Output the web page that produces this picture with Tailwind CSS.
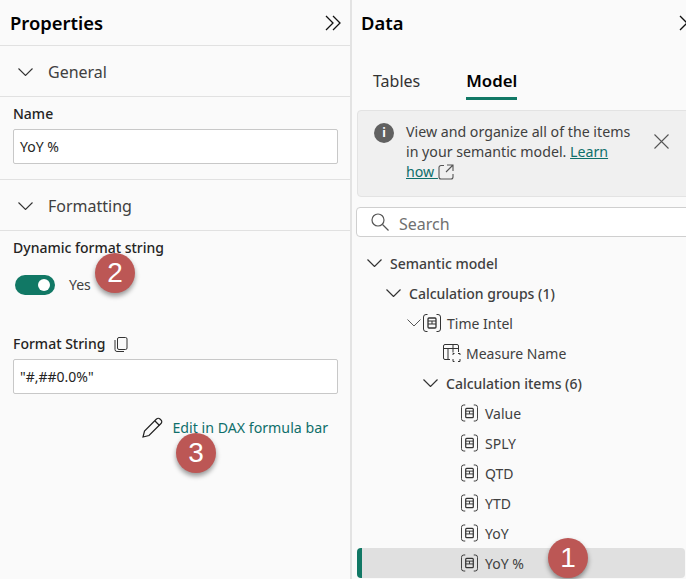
<!DOCTYPE html>
<html lang="en">
  <head>
    <meta charset="UTF-8" />
    <title>Properties and Data panes</title>
    <script src="https://cdn.jsdelivr.net/npm/@tailwindcss/browser@4"></script>
  </head>
  <body class="bg-[#fafafa] font-['Noto_Sans',sans-serif] text-[#252423] overflow-hidden">
    <div class="relative flex w-[686px] h-[579px] overflow-hidden">
      <!-- Properties pane -->
      <section class="w-[350px] shrink-0 h-full">
        <header class="flex items-center justify-between h-[46px] pl-[10px] pr-[9px] border-b border-[#e1e1e1]">
          <h2 class="text-[18.4px] font-semibold text-black">Properties</h2>
          <svg class="w-4 h-4" viewBox="0 0 16 16" fill="none" stroke="#111" stroke-width="1.3"><path d="M1 1l7 7-7 7M8 1l7 7-7 7" /></svg>
        </header>
        <div class="flex items-center h-[51px] pl-[18px] pt-[1px] gap-[15px] border-b border-[#e1e1e1]">
          <svg class="w-[15px] h-[8px]" viewBox="0 0 15 8" fill="none" stroke="#333" stroke-width="1.1"><path d="M.5.5l7 7 7-7" /></svg>
          <span class="text-[16px] text-[#404040]">General</span>
        </div>
        <div class="h-[83px] pl-[13px] pr-[12px] pt-[7px] border-b border-[#e1e1e1]">
          <p class="text-[14px] leading-[20px] font-medium">Name</p>
          <div class="flex items-center h-[35px] mt-[5px] px-[6px] bg-white border border-[#c8c8c8] rounded-[2px] text-[14px]">YoY %</div>
        </div>
        <div class="flex items-center h-[51px] pl-[18px] pt-[1px] gap-[15px] border-b border-[#e1e1e1]">
          <svg class="w-[15px] h-[8px]" viewBox="0 0 15 8" fill="none" stroke="#333" stroke-width="1.1"><path d="M.5.5l7 7 7-7" /></svg>
          <span class="text-[16px] text-[#404040]">Formatting</span>
        </div>
        <div class="pl-[13px] pr-[12px] pt-[7px]">
          <p class="text-[14px] leading-[20px] font-medium">Dynamic format string</p>
          <div class="flex items-center gap-[14px] mt-[16px] ml-[2px]">
            <div class="flex items-center justify-end w-[40px] h-[20px] pr-[5px] rounded-full bg-[#117865]">
              <span class="w-[12px] h-[12px] rounded-full bg-white"></span>
            </div>
            <span class="text-[14px] text-[#404040]">Yes</span>
          </div>
          <div class="flex items-center gap-[9px] mt-[39px]">
            <span class="text-[14px] leading-[20px] font-medium">Format String</span>
            <svg class="w-[14px] h-[15px]" viewBox="0 0 14 15" fill="none" stroke="#333" stroke-width="1"><rect x="3.5" y=".5" width="9.5" height="12" rx="1.5" /><path d="M1 3v9.5A2 2 0 0 0 3 14.5h7" /></svg>
          </div>
          <div class="flex items-center h-[35px] mt-[5px] px-[6px] bg-white border border-[#c8c8c8] rounded-[2px] text-[14px]">"#,##0.0%"</div>
          <div class="flex items-center justify-end gap-[9px] mt-[23px] pr-[10px]">
            <svg class="w-[21px] h-[21px]" viewBox="0 0 21 21" fill="none" stroke="#222" stroke-width="1.2"><path d="M1 20l1.5-6L14.5 2a2.4 2.4 0 0 1 3.5 0l1 1a2.4 2.4 0 0 1 0 3.5L7 18.5z" /><path d="M13 4l4.5 4.5" /></svg>
            <span class="text-[14.2px] text-[#0f6f6b]">Edit in DAX formula bar</span>
          </div>
        </div>
      </section>

      <!-- Data pane -->
      <section class="flex-1 min-w-0 h-full border-l-2 border-[#e3e3e3]">
        <header class="flex items-center justify-between h-[46px] pl-[9px]">
          <h2 class="text-[18.4px] font-semibold text-black">Data</h2>
          <svg class="w-4 h-4 shrink-0 -mr-[9px]" viewBox="0 0 16 16" fill="none" stroke="#111" stroke-width="1.3"><path d="M1 1l7 7-7 7M8 1l7 7-7 7" /></svg>
        </header>
        <nav class="flex gap-[46px] h-[54px] pl-[21px] pt-[21px]">
          <span class="text-[16px] leading-[28px] text-[#333]">Tables</span>
          <span class="h-[33px] text-[16.8px] leading-[28px] font-semibold text-black border-b-[3px] border-[#117865]">Model</span>
        </nav>
        <div class="flex h-[87px] ml-[5px] -mr-[4px] mt-[10px] pl-[16px] pt-[12px] bg-[#f0f0f0] border border-[#e3e3e3] rounded-[4px]">
          <span class="flex items-center justify-center w-[20px] h-[20px] shrink-0 rounded-full bg-[#616161] text-white text-[12px] font-bold leading-none">i</span>
          <p class="w-[228px] ml-[12px] -mt-[1px] text-[14.2px] leading-[20px] text-[#404040]">View and organize all of the items in your semantic model. <a class="text-[#0f6f6b] underline">Learn how </a><svg class="inline w-[16px] h-[16px] align-[-3px]" viewBox="0 0 16 16" fill="none" stroke="#555" stroke-width="1.1"><path d="M6 1.5H3A2 2 0 0 0 1 3.500v9.500a2 2 0 0 0 2 2h10a2 2 0 0 0 2-2v-3M9 1h6v6M15 1L8 8" /></svg></p>
          <svg class="w-[15px] h-[15px] ml-[20px] mt-[11px] shrink-0" viewBox="0 0 15 15" fill="none" stroke="#555" stroke-width="1.1"><path d="M.5.5l14 14M14.500.5l-14 14" /></svg>
        </div>
        <div class="flex items-center h-[30px] ml-[4px] -mr-[6px] mt-[10px] pl-[14px] gap-[10px] bg-white border border-[#cfcfcf] rounded-[4px]">
          <svg class="w-[18px] h-[18px]" viewBox="0 0 18 18" fill="none" stroke="#555" stroke-width="1.2"><circle cx="7" cy="7" r="6" /><path d="M11.500 11.500l6 6" /></svg>
          <span class="relative top-[2px] text-[16px] text-[#707070]">Search</span>
        </div>
        <!-- Tree -->
        <ul class="mt-[11px] text-[14px] text-[#404040]">
          <li class="flex items-center h-[30px] pl-[15px] gap-[8px] font-medium">
            <svg class="w-[15px] h-[8px]" viewBox="0 0 15 8" fill="none" stroke="#333" stroke-width="1.2"><path d="M.5.5l7 7 7-7" /></svg>Semantic model
          </li>
          <li class="flex items-center h-[30px] pl-[34px] gap-[8px] font-medium">
            <svg class="w-[15px] h-[8px]" viewBox="0 0 15 8" fill="none" stroke="#333" stroke-width="1.2"><path d="M.5.5l7 7 7-7" /></svg>Calculation groups (1)
          </li>
          <li class="flex items-center h-[30px] pl-[55px] gap-[2px]">
            <svg class="w-[14px] h-[8px]" viewBox="0 0 14 8" fill="none" stroke="#555" stroke-width="1"><path d="M.5.5L7 7 13.500.5" /></svg>
            <svg class="w-[18px] h-[18px]" viewBox="0 0 18 18" fill="none" stroke="#333" stroke-width="1"><path d="M4.500.5H3A2.500 2.500 0 0 0 .5 3v12A2.500 2.500 0 0 0 3 17.500h1.500M13.500.5H15A2.500 2.500 0 0 1 17.500 3v12a2.500 2.500 0 0 1-2.500 2.500h-1.500" /><rect x="5" y="4" width="8" height="10" rx="1" stroke-width="1.300" /><path d="M5 7h8M5 10h8M9 7v3" /></svg>
            <span class="ml-[4px]">Time Intel</span>
          </li>
          <li class="flex items-center h-[30px] pl-[91px] gap-[5px]">
            <svg class="w-[18px] h-[18px]" viewBox="0 0 18 18" fill="none" stroke="#333" stroke-width="1"><path d="M7 15.500H2A1.500 1.500 0 0 1 .5 14V2A1.500 1.500 0 0 1 2 .5h12A1.500 1.500 0 0 1 15.500 2v6M.5 4.500h15M5 4.500v11M10 .5v8" /><path d="M10 11V9.500h1.500M15 9.500h2V11M10 15v2.500h1.500M15 17.500h2V15" /></svg>
            Measure Name
          </li>
          <li class="flex items-center h-[30px] pl-[71px] gap-[8px] font-medium">
            <svg class="w-[15px] h-[8px]" viewBox="0 0 15 8" fill="none" stroke="#333" stroke-width="1.2"><path d="M.5.5l7 7 7-7" /></svg>Calculation items (6)
          </li>
          <li class="flex items-center h-[30px] pl-[109px] gap-[7px]">
            <svg class="w-[17px] h-[18px]" viewBox="0 0 18 18" fill="none" stroke="#333" stroke-width="1"><path d="M4.500.5H3A2.500 2.500 0 0 0 .5 3v12A2.500 2.500 0 0 0 3 17.500h1.500M13.500.5H15A2.500 2.500 0 0 1 17.500 3v12a2.500 2.500 0 0 1-2.500 2.500h-1.500" /><rect x="5" y="4" width="8" height="10" rx="1" stroke-width="1.300" /><path d="M5 7h8M5 10h8M9 7v3" /></svg>Value
          </li>
          <li class="flex items-center h-[30px] pl-[109px] gap-[7px]">
            <svg class="w-[17px] h-[18px]" viewBox="0 0 18 18" fill="none" stroke="#333" stroke-width="1"><path d="M4.500.5H3A2.500 2.500 0 0 0 .5 3v12A2.500 2.500 0 0 0 3 17.500h1.500M13.500.5H15A2.500 2.500 0 0 1 17.500 3v12a2.500 2.500 0 0 1-2.500 2.500h-1.500" /><rect x="5" y="4" width="8" height="10" rx="1" stroke-width="1.300" /><path d="M5 7h8M5 10h8M9 7v3" /></svg>SPLY
          </li>
          <li class="flex items-center h-[30px] pl-[109px] gap-[7px]">
            <svg class="w-[17px] h-[18px]" viewBox="0 0 18 18" fill="none" stroke="#333" stroke-width="1"><path d="M4.500.5H3A2.500 2.500 0 0 0 .5 3v12A2.500 2.500 0 0 0 3 17.500h1.500M13.500.5H15A2.500 2.500 0 0 1 17.500 3v12a2.500 2.500 0 0 1-2.500 2.500h-1.500" /><rect x="5" y="4" width="8" height="10" rx="1" stroke-width="1.300" /><path d="M5 7h8M5 10h8M9 7v3" /></svg>QTD
          </li>
          <li class="flex items-center h-[30px] pl-[109px] gap-[7px]">
            <svg class="w-[17px] h-[18px]" viewBox="0 0 18 18" fill="none" stroke="#333" stroke-width="1"><path d="M4.500.5H3A2.500 2.500 0 0 0 .5 3v12A2.500 2.500 0 0 0 3 17.500h1.500M13.500.5H15A2.500 2.500 0 0 1 17.500 3v12a2.500 2.500 0 0 1-2.500 2.500h-1.500" /><rect x="5" y="4" width="8" height="10" rx="1" stroke-width="1.300" /><path d="M5 7h8M5 10h8M9 7v3" /></svg>YTD
          </li>
          <li class="flex items-center h-[30px] pl-[109px] gap-[7px]">
            <svg class="w-[17px] h-[18px]" viewBox="0 0 18 18" fill="none" stroke="#333" stroke-width="1"><path d="M4.500.5H3A2.500 2.500 0 0 0 .5 3v12A2.500 2.500 0 0 0 3 17.500h1.500M13.500.5H15A2.500 2.500 0 0 1 17.500 3v12a2.500 2.500 0 0 1-2.500 2.500h-1.500" /><rect x="5" y="4" width="8" height="10" rx="1" stroke-width="1.300" /><path d="M5 7h8M5 10h8M9 7v3" /></svg>YoY
          </li>
          <li class="flex items-center h-[30px] ml-[5px] mr-[1px] pl-[104px] gap-[7px] bg-[#e0e0e0] border-l-[5px] border-[#117865] rounded-[4px]">
            <svg class="w-[17px] h-[18px] -ml-[5px]" viewBox="0 0 18 18" fill="none" stroke="#333" stroke-width="1"><path d="M4.500.5H3A2.500 2.500 0 0 0 .5 3v12A2.500 2.500 0 0 0 3 17.500h1.500M13.500.5H15A2.500 2.500 0 0 1 17.500 3v12a2.500 2.500 0 0 1-2.500 2.500h-1.500" /><rect x="5" y="4" width="8" height="10" rx="1" stroke-width="1.300" /><path d="M5 7h8M5 10h8M9 7v3" /></svg>YoY %
          </li>
        </ul>
      </section>

      <!-- Numbered callouts -->
      <span class="absolute left-[95px] top-[253px] flex items-center justify-center w-[40px] h-[40px] rounded-full bg-[#bc5755] text-white text-[28px] font-['Liberation_Sans',sans-serif] shadow-[0_3px_5px_rgba(0,0,0,0.4)]">2</span>
      <span class="absolute left-[176px] top-[433px] flex items-center justify-center w-[40px] h-[40px] rounded-full bg-[#bc5755] text-white text-[28px] font-['Liberation_Sans',sans-serif] shadow-[0_3px_5px_rgba(0,0,0,0.4)]">3</span>
      <span class="absolute left-[548px] top-[538px] flex items-center justify-center w-[40px] h-[40px] rounded-full bg-[#bc5755] text-white text-[28px] font-['Liberation_Sans',sans-serif] shadow-[0_3px_5px_rgba(0,0,0,0.4)]">1</span>
    </div>
  </body>
</html>
